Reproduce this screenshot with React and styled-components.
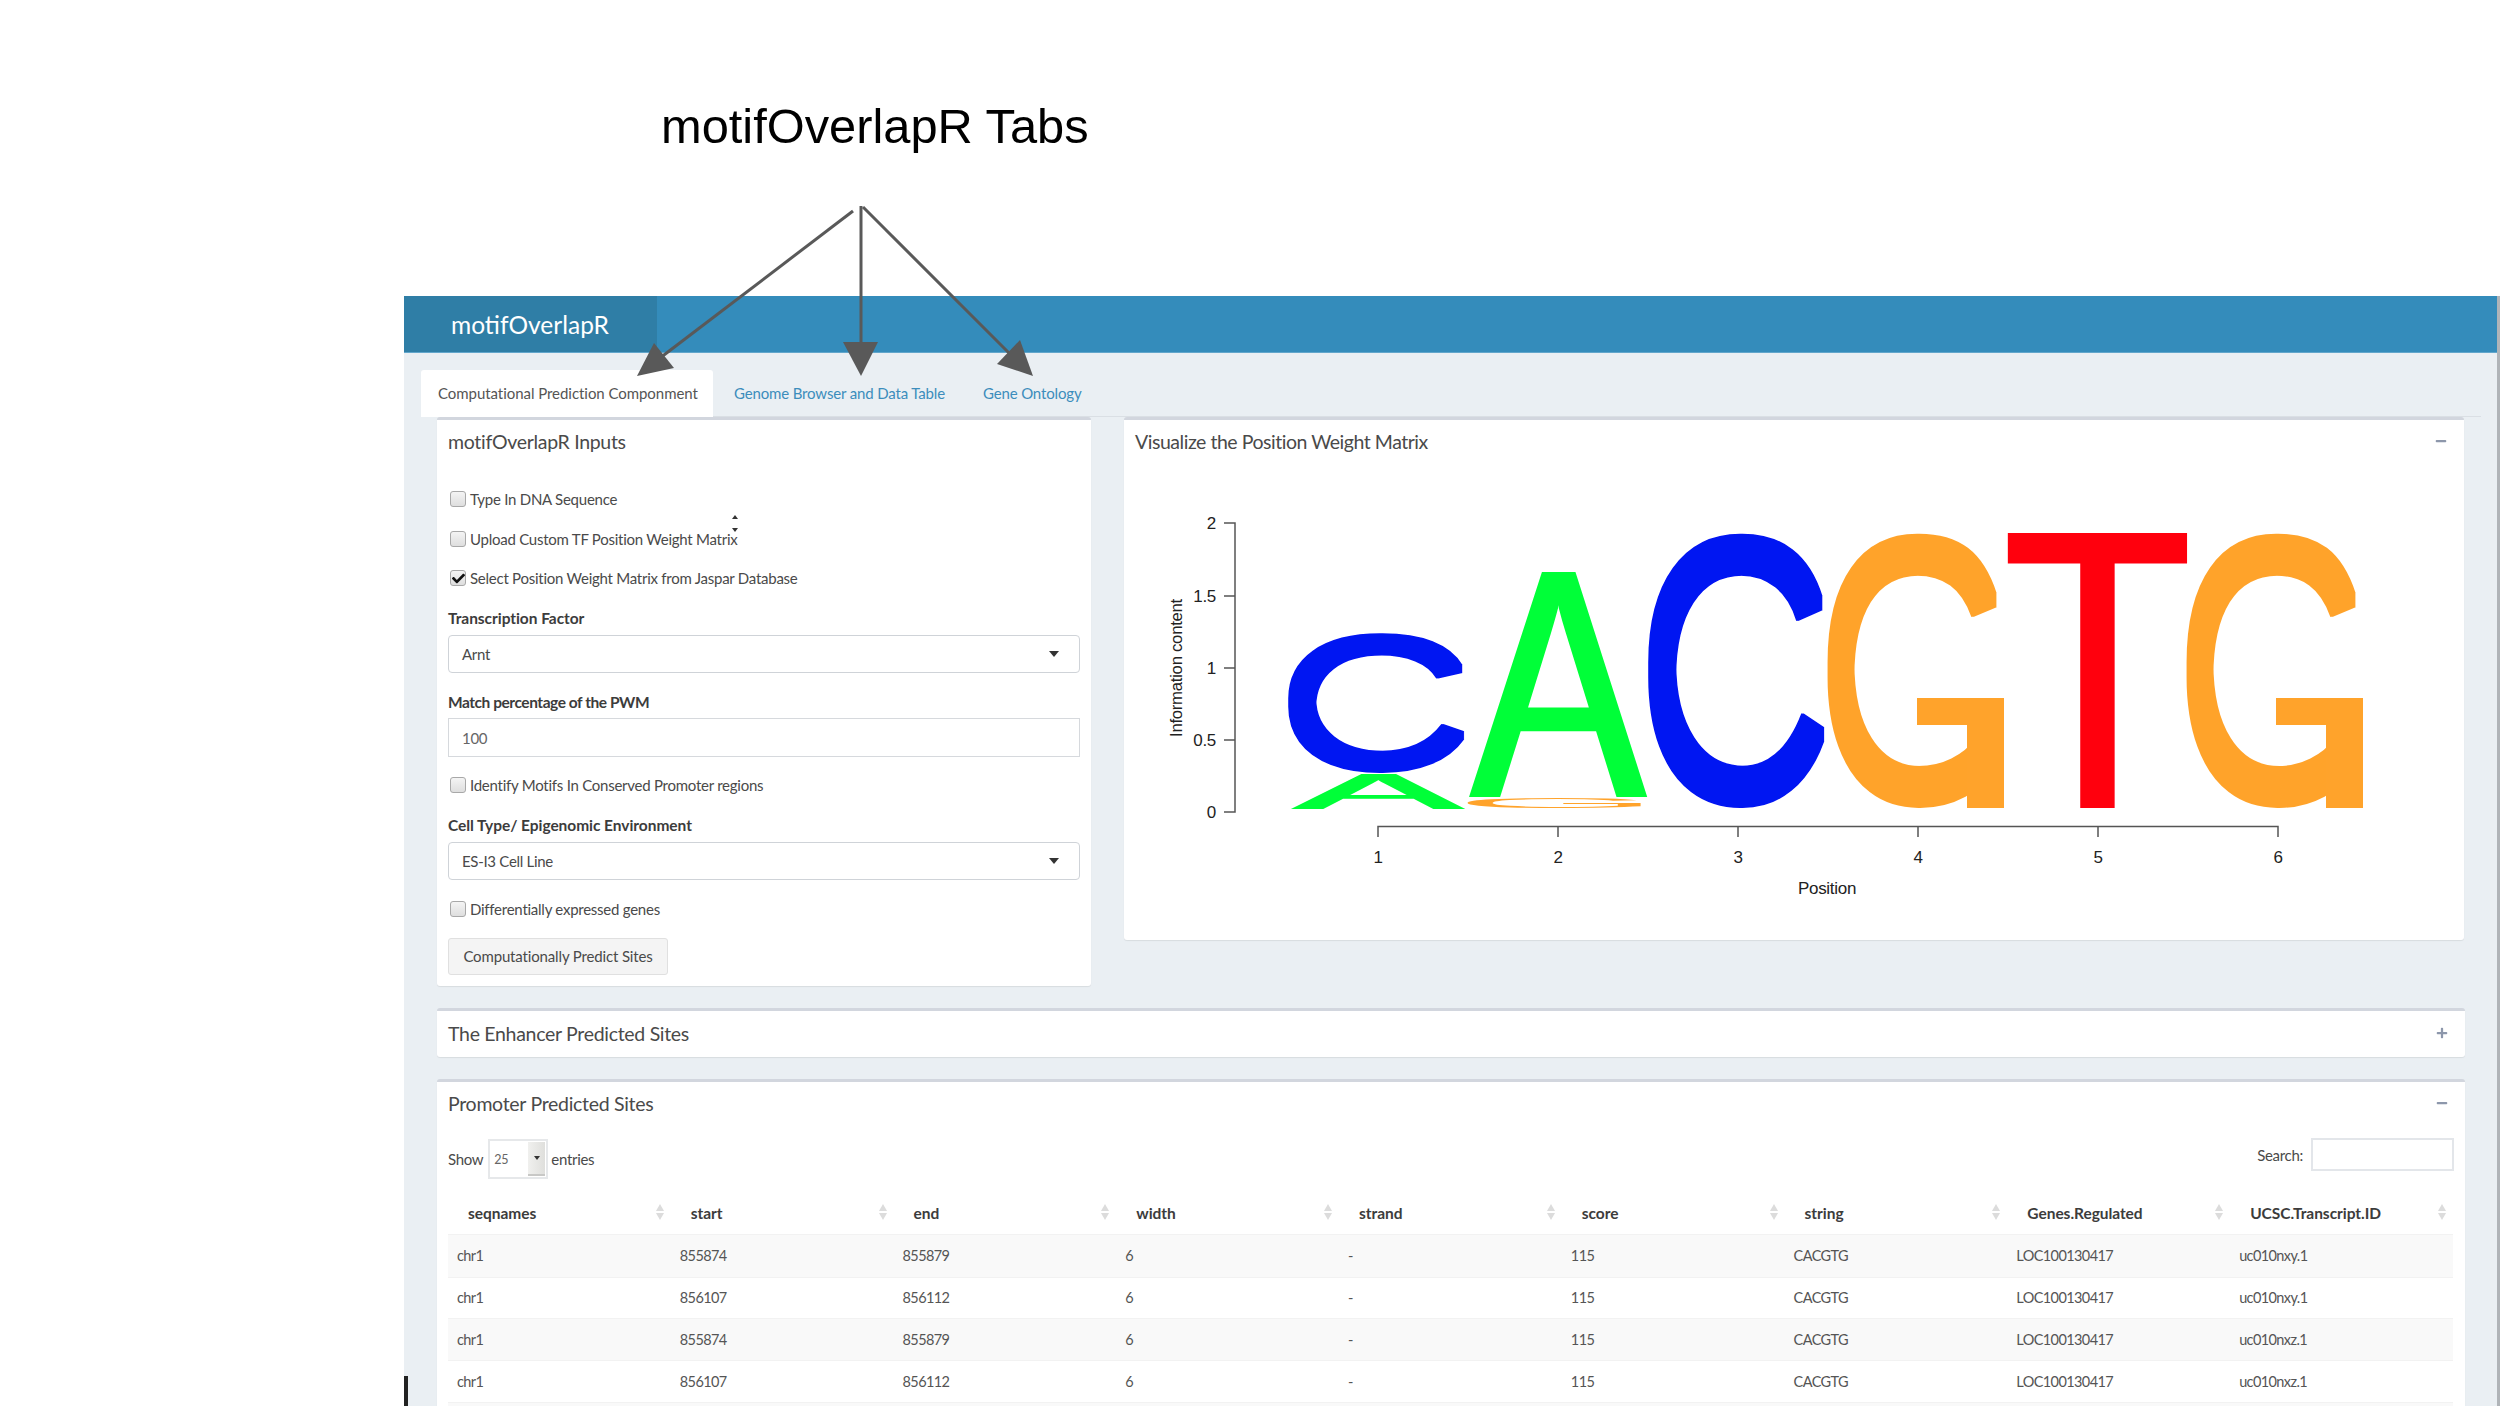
import React from 'react';
import styled, { createGlobalStyle } from 'styled-components';
import { FaMinus, FaPlus, FaCheck } from 'react-icons/fa';

const GlobalStyle = createGlobalStyle`
  html, body {
    margin: 0;
    height: 1406px;
    overflow: hidden;
    background: #fff;
  }
  * { box-sizing: border-box; }
`;

const uiFont = `Lato, "Open Sans", "Liberation Sans", sans-serif`;

const Page = styled.div`
  position: relative;
  width: 2500px;
  height: 1406px;
  overflow: hidden;
  font-family: ${uiFont};
  font-size: 15px;
  letter-spacing: -0.3px;
  color: #4a4a4a;
`;

const Hero = styled.div`
  height: 296px;
  padding: 96px 0 0 661px;
`;

const HeroTitle = styled.h1`
  margin: 0;
  font-family: "Liberation Sans", Arial, sans-serif;
  font-size: 48.8px;
  line-height: 60px;
  font-weight: 400;
  letter-spacing: 0;
  color: #000;
`;

const ArrowLayer = styled.svg`
  position: absolute;
  left: 0;
  top: 0;
  z-index: 5;
  pointer-events: none;
`;

const App_ = styled.div`
  position: relative;
  margin-left: 404px;
  width: 2096px;
  height: 1110px;
  background: #eaeff3;
  border-right: 3px solid #b0b4b8;
`;

const BlackMark = styled.div`
  position: absolute;
  left: 0;
  top: 1080px;
  width: 4px;
  height: 30px;
  background: #222;
`;

const Header = styled.header`
  display: flex;
  height: 57px;
  background: #348cbb;
  border-bottom: 1px solid #62a6cb;
`;

const Brand = styled.div`
  display: flex;
  align-items: center;
  width: 253px;
  padding-left: 47px;
  background: #2f7ea6;
  color: #fff;
  font-size: 24.5px;
  letter-spacing: 0;
`;

const Content = styled.div`
  padding: 17px 16px 0 17px;
`;

const TabBar = styled.nav`
  display: flex;
  height: 47px;
  border-bottom: 1px solid #dadfe4;
`;

const Tab = styled.div`
  display: flex;
  align-items: center;
  height: 47px;
  padding: ${p => (p.$active ? '0 17px 1px' : '0 21px 1px')};
  width: ${p => p.$width}px;
  background: ${p => (p.$active ? '#fff' : 'transparent')};
  color: ${p => (p.$active ? '#555' : '#3c8dbc')};
  border-radius: 3px 3px 0 0;
  white-space: nowrap;
  letter-spacing: ${p => (p.$active ? '-0.05px' : '-0.15px')};
`;

const Panel = styled.div`
  padding: 0 16px;
`;

const TopRow = styled.div`
  display: grid;
  grid-template-columns: 654px 1340px;
  column-gap: 33px;
  align-items: start;
  margin-bottom: 22px;
`;

const Box = styled.section`
  position: relative;
  background: #fff;
  border-top: 3px solid #d2d6de;
  border-radius: 3px;
  box-shadow: 0 1px 1px rgba(0, 0, 0, 0.08);
  margin-bottom: ${p => p.$bottom || 0}px;
  height: ${p => (p.$height ? `${p.$height}px` : 'auto')};
`;

const BoxHead = styled.div`
  display: flex;
  align-items: center;
  justify-content: space-between;
  height: ${p => p.$height || 44}px;
  padding: 0 17px 2px 11px;
`;

const BoxTitle = styled.h3`
  margin: 0;
  font-size: 19.5px;
  font-weight: 400;
  letter-spacing: ${p => (p.$tight ? '-0.47px' : '-0.3px')};
  color: #4a4a4a;
`;

const ToolIcon = styled.span`
  display: flex;
  color: #8d97ab;
  font-size: 12px;
`;

const FormBody = styled.div`
  padding: 23px 11px 12px;
`;

const CheckRow = styled.div`
  display: flex;
  align-items: center;
  height: 24px;
  margin-bottom: ${p => p.$bottom}px;
  padding-left: 2px;
  letter-spacing: -0.25px;
`;

const CheckBox = styled.span`
  display: flex;
  align-items: center;
  justify-content: center;
  width: 16px;
  height: 16px;
  margin-right: 4px;
  border: 1px solid #a8a8a8;
  border-radius: 3px;
  background: linear-gradient(#f4f4f4, #dedede);
  color: #111;
  font-size: 13px;
`;

const FieldLabel = styled.label`
  display: block;
  height: 20px;
  line-height: 20px;
  margin-bottom: ${p => p.$bottom}px;
  font-size: 15.5px;
  font-weight: 700;
  letter-spacing: ${p => (p.$tight ? '-0.45px' : '-0.05px')};
  color: #3c3c3c;
`;

const SelectBox = styled.div`
  display: flex;
  align-items: center;
  justify-content: space-between;
  height: 38px;
  margin-bottom: ${p => p.$bottom}px;
  padding: 0 20px 1px 13px;
  border: 1px solid #cfd3d8;
  border-radius: 4px;
  background: #fff;
`;

const Caret = styled.span`
  width: 0;
  height: 0;
  border-left: 5.5px solid transparent;
  border-right: 5.5px solid transparent;
  border-top: 6px solid #333;
`;

const TextField = styled.div`
  display: flex;
  align-items: center;
  height: 39px;
  margin-bottom: ${p => p.$bottom}px;
  padding: 0 13px;
  border: 1px solid #d6d9dd;
  color: #666;
`;

const ActionButton = styled.button`
  display: block;
  height: 37px;
  width: 220px;
  padding: 0 0 2px;
  border: 1px solid #e0e0e0;
  border-radius: 3px;
  background: #f4f4f4;
  color: #4a4a4a;
  font: inherit;
  letter-spacing: -0.15px;
`;

const Spinner = styled.span`
  position: absolute;
  left: 295px;
  top: ${p => p.$top}px;
  width: 0;
  height: 0;
  border-left: 3.5px solid transparent;
  border-right: 3.5px solid transparent;
  ${p => (p.$down ? 'border-top: 4px solid #333;' : 'border-bottom: 4px solid #333;')}
`;

const TableBody = styled.div`
  padding: 0 11px;
`;

const TableTools = styled.div`
  display: flex;
  justify-content: space-between;
  height: 40px;
  margin: 13px 0;
`;

const ToolGroup = styled.div`
  display: flex;
  align-items: center;
  align-self: ${p => p.$self || 'stretch'};
  gap: ${p => p.$gap}px;
  height: ${p => p.$height || 40}px;
`;

const LengthSelect = styled.div`
  display: flex;
  justify-content: space-between;
  align-items: center;
  width: 60px;
  height: 40px;
  margin-right: -2px;
  padding: 1px 1px 1px 4px;
  border: 2px solid #e6e8ea;
  font-size: 12.5px;
  color: #666;
`;

const LengthButton = styled.span`
  display: flex;
  align-items: center;
  justify-content: center;
  width: 17px;
  height: 100%;
  background: linear-gradient(90deg, #f0f0ee, #dfdfdc);
  border-bottom: 2px solid #c8c8c6;
`;

const SmallCaret = styled.span`
  width: 0;
  height: 0;
  border-left: 3.5px solid transparent;
  border-right: 3.5px solid transparent;
  border-top: 4px solid #333;
`;

const SearchInput = styled.div`
  width: 143px;
  height: 33px;
  border: 2px solid #e3e6ea;
  background: #fff;
`;

const DataTable = styled.table`
  width: 2005px;
  table-layout: fixed;
  border-collapse: collapse;
`;

const HeadCell = styled.th`
  position: relative;
  height: 42px;
  padding: 0 0 0 20px;
  text-align: left;
  font-size: 15.5px;
  font-weight: 700;
  letter-spacing: -0.05px;
  color: #3c3c3c;
`;

const SortMark = styled.span`
  position: absolute;
  right: 7px;
  top: 12px;
  &::before, &::after {
    content: '';
    display: block;
    width: 0;
    height: 0;
    border-left: 4.5px solid transparent;
    border-right: 4.5px solid transparent;
  }
  &::before {
    border-bottom: 7px solid #dcdcdc;
    margin-bottom: 2px;
  }
  &::after {
    border-top: 7px solid #dcdcdc;
  }
`;

const Row = styled.tr`
  background: ${p => (p.$odd ? '#f9f9f9' : '#fff')};
  &:first-child td {
    height: 43px;
  }
`;

const Cell = styled.td`
  height: 41.7px;
  padding: 0 0 0 9px;
  border-top: 1px solid #f2f2f2;
  font-size: 14.5px;
  letter-spacing: -0.6px;
  color: #555;
`;

const ChartSvg = styled.svg`
  display: block;
`;

const columns = ['seqnames', 'start', 'end', 'width', 'strand', 'score', 'string', 'Genes.Regulated', 'UCSC.Transcript.ID'];

const rows = [
  ['chr1', '855874', '855879', '6', '-', '115', 'CACGTG', 'LOC100130417', 'uc010nxy.1'],
  ['chr1', '856107', '856112', '6', '-', '115', 'CACGTG', 'LOC100130417', 'uc010nxy.1'],
  ['chr1', '855874', '855879', '6', '-', '115', 'CACGTG', 'LOC100130417', 'uc010nxz.1'],
  ['chr1', '856107', '856112', '6', '-', '115', 'CACGTG', 'LOC100130417', 'uc010nxz.1'],
  ['', '', '', '', '', '', '', '', ''],
];

// ink box of each letter in Liberation Sans, in em
const glyphs = {
  A: [-0.002, 0.668, 0, 0.688],
  C: [0.05, 0.683, -0.01, 0.7],
  G: [0.052, 0.716, -0.01, 0.7],
  T: [0.023, 0.591, 0, 0.688],
};

const LOGO = { A: '#00ff38', C: '#0012f2', G: '#ffa32b', T: '#ff0010' };

const Letter = ({ ch, x0, x1, y0, y1, rx = 0, ry = 0 }) => {
  const [gx0, gx1, gy0, gy1] = glyphs[ch];
  const sx = (x1 - x0 - rx * 2) / (gx1 - gx0) / 100;
  const sy = (y1 - y0 - ry * 2) / (gy1 - gy0) / 100;
  const tx = x0 + rx - gx0 * 100 * sx;
  const ty = y1 - ry + gy0 * 100 * sy;
  const text = (
    <text
      transform={`translate(${tx} ${ty}) scale(${sx} ${sy})`}
      fontFamily='"Liberation Sans", Arial, sans-serif'
      fontSize="100"
      textRendering="geometricPrecision"
      fill={LOGO[ch]}
    >
      {ch}
    </text>
  );
  if (!rx && !ry) return text;
  return (
    <g filter={`url(#thick-${rx}-${ry})`}>{text}</g>
  );
};

// the logo's G has its spur lower and a stem down to the baseline
const TallG = ({ x }) => (
  <g>
    <Letter ch="G" x0={x} x1={x + 176} y0={533} y1={808} rx={1} ry={7} />
    <rect x={x + 80} y={640} width={100} height={58} fill="#fff" />
    <rect x={x + 89} y={698} width={87} height={27} fill={LOGO.G} />
    <rect x={x + 139} y={698} width={37} height={110} fill={LOGO.G} />
  </g>
);

const Thicken = ({ rx, ry }) => (
  <filter id={`thick-${rx}-${ry}`} filterUnits="userSpaceOnUse" x="1124" y="464" width="1340" height="476">
    <feMorphology operator="dilate" radius={`${rx} ${ry}`} />
  </filter>
);

const axisColor = '#555';
const yTicks = [['2', 523], ['1.5', 596], ['1', 668], ['0.5', 740], ['0', 812]];
const xTicks = [1378, 1558, 1738, 1918, 2098, 2278];

const LogoChart = () => (
  <ChartSvg width="1340" height="476" viewBox="1124 464 1340 476">
    <defs>
      <Thicken rx={1} ry={7} />
      <Thicken rx={1} ry={4} />
      <Thicken rx={4} ry={0} />
      <Thicken rx={3} ry={0} />
    </defs>
    <g fontFamily='"Liberation Sans", Arial, sans-serif' fontSize="17" fill="#222">
      <path d={`M1224 523H1235V812H1224M1224 596H1235M1224 668H1235M1224 740H1235`} fill="none" stroke={axisColor} strokeWidth="1.5" />
      {yTicks.map(([label, y]) => (
        <text key={label} x="1216" y={y + 6} textAnchor="end">{label}</text>
      ))}
      <path d={`M1378 837V826.5H2278V837M1558 826.5V837M1738 826.5V837M1918 826.5V837M2098 826.5V837`} fill="none" stroke={axisColor} strokeWidth="1.5" />
      {xTicks.map((x, i) => (
        <text key={x} x={x} y="863" textAnchor="middle">{i + 1}</text>
      ))}
      <text x="1827" y="894" textAnchor="middle">Position</text>
      <text transform="translate(1182 668) rotate(-90)" textAnchor="middle" fontSize="16.8">Information content</text>
    </g>
    <Letter ch="C" x0={1288} x1={1464} y0={633} y1={773} rx={1} ry={4} />
    <Letter ch="A" x0={1290} x1={1466} y0={774} y1={809} rx={4} />
    <Letter ch="A" x0={1468} x1={1648} y0={572} y1={797} rx={3} />
    <Letter ch="G" x0={1468} x1={1644} y0={798} y1={808} />
    <Letter ch="C" x0={1648} x1={1824} y0={533} y1={808} rx={1} ry={7} />
    <TallG x={1828} />
    <Letter ch="T" x0={2008} x1={2188} y0={533} y1={808} rx={3} />
    <TallG x={2187} />
  </ChartSvg>
);

const Arrows = () => (
  <ArrowLayer width="2500" height="500">
    <g stroke="#595959" strokeWidth="3" fill="none">
      <line x1="853" y1="211" x2="660" y2="358" />
      <line x1="861" y1="206" x2="861" y2="345" />
      <line x1="863" y1="207" x2="1010" y2="354" />
    </g>
    <g fill="#595959">
      <polygon points="637,376 654,343 674,368" />
      <polygon points="861,376 843,342 878,342" />
      <polygon points="1033,376 1020,340 997,364" />
    </g>
  </ArrowLayer>
);

const Check = ({ bottom, on, children }) => (
  <CheckRow $bottom={bottom}>
    <CheckBox>{on && <FaCheck />}</CheckBox>
    {children}
  </CheckRow>
);

const App = () => (
  <Page>
    <GlobalStyle />
    <Hero>
      <HeroTitle>motifOverlapR Tabs</HeroTitle>
    </Hero>
    <Arrows />
    <App_>
      <BlackMark />
      <Header>
        <Brand>motifOverlapR</Brand>
      </Header>
      <Content>
        <TabBar>
          <Tab $active $width={292}>Computational Prediction Componment</Tab>
          <Tab $width={249}>Genome Browser and Data Table</Tab>
          <Tab>Gene Ontology</Tab>
        </TabBar>
        <Panel>
          <TopRow>
            <Box $height={569}>
              <BoxHead>
                <BoxTitle>motifOverlapR Inputs</BoxTitle>
              </BoxHead>
              <Spinner $top={95} />
              <Spinner $top={108} $down />
              <FormBody>
                <Check bottom={15.5}>Type In DNA Sequence</Check>
                <Check bottom={15.5}>Upload Custom TF Position Weight Matrix</Check>
                <Check bottom={18} on>Select Position Weight Matrix from Jaspar Database</Check>
                <FieldLabel $bottom={7}>Transcription Factor</FieldLabel>
                <SelectBox $bottom={19}>Arnt<Caret /></SelectBox>
                <FieldLabel $bottom={6} $tight>Match percentage of the PWM</FieldLabel>
                <TextField $bottom={16}>100</TextField>
                <Check bottom={18}>Identify Motifs In Conserved Promoter regions</Check>
                <FieldLabel $bottom={7}>Cell Type/ Epigenomic Environment</FieldLabel>
                <SelectBox $bottom={17}>ES-I3 Cell Line<Caret /></SelectBox>
                <Check bottom={17}>Differentially expressed genes</Check>
                <ActionButton>Computationally Predict Sites</ActionButton>
              </FormBody>
            </Box>
            <Box $height={523}>
              <BoxHead>
                <BoxTitle $tight>Visualize the Position Weight Matrix</BoxTitle>
                <ToolIcon><FaMinus /></ToolIcon>
              </BoxHead>
              <LogoChart />
            </Box>
          </TopRow>
          <Box $bottom={22}>
            <BoxHead $height={46}>
              <BoxTitle>The Enhancer Predicted Sites</BoxTitle>
              <ToolIcon><FaPlus /></ToolIcon>
            </BoxHead>
          </Box>
          <Box>
            <BoxHead>
              <BoxTitle>Promoter Predicted Sites</BoxTitle>
              <ToolIcon><FaMinus /></ToolIcon>
            </BoxHead>
            <TableBody>
              <TableTools>
                <ToolGroup $gap={5}>
                  Show
                  <LengthSelect>
                    25
                    <LengthButton><SmallCaret /></LengthButton>
                  </LengthSelect>
                  entries
                </ToolGroup>
                <ToolGroup $gap={8} $self="flex-start" $height={31}>
                  Search:
                  <SearchInput />
                </ToolGroup>
              </TableTools>
              <DataTable>
                <thead>
                  <tr>
                    {columns.map(c => (
                      <HeadCell key={c}>{c}<SortMark /></HeadCell>
                    ))}
                  </tr>
                </thead>
                <tbody>
                  {rows.map((r, i) => (
                    <Row key={i} $odd={i % 2 === 0}>
                      {r.map((v, j) => <Cell key={j}>{v}</Cell>)}
                    </Row>
                  ))}
                </tbody>
              </DataTable>
            </TableBody>
          </Box>
        </Panel>
      </Content>
    </App_>
  </Page>
);

export default App;
